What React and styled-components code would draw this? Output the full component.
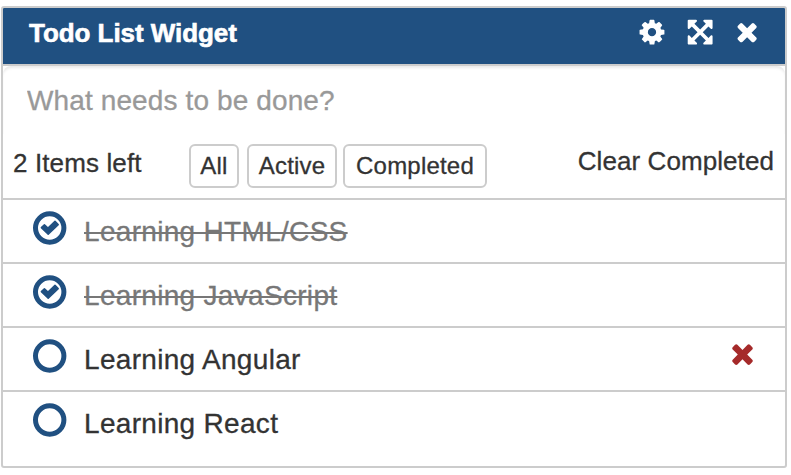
import React from "react";
import styled, { createGlobalStyle } from "styled-components";

const GlobalStyle = createGlobalStyle`
  * { box-sizing: border-box; }
  body { margin: 0; background: #fff; color: #333; font-family: "Liberation Sans", Arial, sans-serif; }
  button, input { font: inherit; color: inherit; margin: 0; }
`;

const Widget = styled.section`
  width: 786px;
  height: 462px;
  margin: 6px 0 0 1px;
  border: 2px solid #ccc;
  border-radius: 3px;
  overflow: hidden;
  -webkit-text-stroke: 0.3px;
`;

const Header = styled.header`
  display: flex;
  align-items: center;
  height: 58px;
  padding: 0 23px 8px 26px;
  background: #205081;
  border-bottom: 2px solid #ccc;
  color: #fff;
`;

const Title = styled.h1`
  flex: 1;
  margin: 0;
  padding-top: 1px;
  font-size: 26px;
  line-height: 30px;
  font-weight: 700;
  letter-spacing: -0.05px;
  -webkit-text-stroke: 0.6px #fff;
`;

const Actions = styled.div`
  display: flex;
  gap: 19px;
`;

const IconButton = styled.button`
  display: flex;
  padding: 0;
  border: 0;
  background: none;
  color: ${(p) => p.$color || "inherit"};
`;

const Glyph = styled.svg`
  display: block;
  width: ${(p) => p.$size}px;
  height: ${(p) => p.$size}px;
  fill: currentColor;
`;

const NewTodo = styled.input`
  display: block;
  width: 100%;
  height: 68px;
  padding: 2px 24px 0;
  border: 0;
  border-radius: 8px 8px 0 0;
  box-shadow: inset 0 3px 3px -1px rgba(0, 0, 0, 0.09);
  background: #fff;
  font-size: 28px !important;
  letter-spacing: 0.12px;
  outline: 0;
  &::placeholder { color: #999; opacity: 1; }
`;

const Toolbar = styled.div`
  display: flex;
  align-items: flex-start;
  height: 64px;
  padding: 10px 11px 0 10px;
`;

const Count = styled.span`
  width: 176px;
  padding-top: 4px;
  font-size: 26px;
  line-height: 30px;
  letter-spacing: 0.12px;
`;

const Filters = styled.div`
  display: flex;
  flex: 1;
`;

const Filter = styled.button`
  width: ${(p) => p.$width}px;
  height: 44px;
  margin-right: ${(p) => p.$gap || 0}px !important;
  padding: 0 0 1px;
  border: 2px solid #ccc;
  border-radius: 6px;
  background: #fff;
  font-size: 24px !important;
  letter-spacing: 0.2px;
  text-align: center;
  -webkit-text-stroke: 0.3px;
`;

const Clear = styled.span`
  padding-top: 2px;
  font-size: 26px;
  line-height: 30px;
  letter-spacing: 0.08px;
  white-space: nowrap;
`;

const List = styled.ul`
  margin: 0;
  padding: 0;
  list-style: none;
`;

const Item = styled.li`
  display: flex;
  align-items: flex-start;
  height: 64px;
  padding: 11px 27px 0 29px;
  border-top: 2px solid #ccc;
`;

const Status = styled.svg`
  width: 36px;
  height: 36px;
  flex: none;
  color: #205081;
`;

const Label = styled.span`
  flex: 1;
  padding-top: 5px;
  margin-left: 16px;
  font-size: 28px;
  line-height: 32px;
  letter-spacing: 0.31px;
`;

const Text = styled.span`
  color: ${(p) => (p.$done ? "#777" : "#333")};
  text-decoration: ${(p) => (p.$done ? "line-through" : "none")};
  text-decoration-thickness: 2px;
  text-decoration-skip-ink: none;
`;

const Remove = styled(IconButton)`
  margin-top: -1px;
`;

const PATHS = {
  cog: "M1152 896q0-106-75-181t-181-75-181 75-75 181 75 181 181 75 181-75 75-181zm512-109v222q0 12-8 23t-20 13l-185 28q-19 54-39 91 35 50 107 138 10 12 10 25t-9 23q-27 37-99 108t-94 71q-12 0-26-9l-138-108q-44 23-91 38-16 136-29 186-7 28-36 28h-222q-14 0-24.5-8.5t-11.5-21.5l-28-184q-49-16-90-37l-141 107q-10 9-25 9-14 0-25-11-126-114-165-168-7-10-7-23 0-12 8-23 15-21 51-66.5t54-70.5q-27-50-41-99l-183-27q-13-2-21-12.5t-8-23.5v-222q0-12 8-23t19-13l186-28q14-46 39-92-40-57-107-138-10-12-10-24 0-10 9-23 26-36 98.5-107.5t94.5-71.5q13 0 26 10l138 107q44-23 91-38 16-136 29-186 7-28 36-28h222q14 0 24.5 8.5t11.5 21.5l28 184q49 16 90 37l142-107q9-9 24-9 13 0 25 10 129 119 165 170 7 8 7 22 0 12-8 23-15 21-51 66.5t-54 70.5q26 50 41 98l183 28q13 2 21 12.5t8 23.5z",
  expand: "M1411 541l-355 355 355 355 144-144q29-31 70-14 39 17 39 59v448q0 26-19 45t-45 19h-448q-42 0-59-40-17-39 14-69l144-144-355-355-355 355 144 144q31 30 14 69-17 40-59 40h-448q-26 0-45-19t-19-45v-448q0-42 40-59 39-17 69 14l144 144 355-355-355-355-144 144q-19 19-45 19-12 0-24-5-40-17-40-59v-448q0-26 19-45t45-19h448q42 0 59 40 17 39-14 69l-144 144 355 355 355-355-144-144q-31-30-14-69 17-40 59-40h448q26 0 45 19t19 45v448q0 42-39 59-13 5-25 5-26 0-45-19z",
  times: "M1490 1322q0 40-28 68l-136 136q-28 28-68 28t-68-28l-294-294-294 294q-28 28-68 28t-68-28l-136-136q-28-28-28-68t28-68l294-294-294-294q-28-28-28-68t28-68l136-136q28-28 68-28t68 28l294 294 294-294q28-28 68-28t68 28l136 136q28 28 28 68t-28 68l-294 294 294 294q28 28 28 68z",
};

const Icon = ({ name, size = 29, viewBox = "0 0 1792 1792" }) => (
  <Glyph $size={size} viewBox={viewBox} aria-hidden="true">
    <path d={PATHS[name]} />
  </Glyph>
);

const StatusIcon = ({ done }) => (
  <Status viewBox="0 0 36 36" aria-hidden="true">
    <circle cx="17.7" cy="17" r="14.2" fill="none" stroke="currentColor" strokeWidth="5" />
    {done && (
      <path
        d="M9.4 16.6 12.4 13.7 16 17.1 23 10.4 26.2 13.6 16.2 23.3Z"
        fill="currentColor"
        stroke="currentColor"
        strokeWidth="1.5"
        strokeLinejoin="round"
      />
    )}
  </Status>
);

const TODOS = [
  { text: "Learning HTML/CSS", done: true },
  { text: "Learning JavaScript", done: true },
  { text: "Learning Angular", done: false, removable: true },
  { text: "Learning React", done: false },
];

export default function App() {
  return (
    <>
      <GlobalStyle />
      <Widget>
        <Header>
          <Title>Todo List Widget</Title>
          <Actions>
            <IconButton aria-label="Settings"><Icon name="cog" viewBox="-30 20 1792 1792" /></IconButton>
            <IconButton aria-label="Expand"><Icon name="expand" viewBox="-40 20 1792 1792" /></IconButton>
            <IconButton aria-label="Close"><Icon name="times" viewBox="24 50 1792 1792" /></IconButton>
          </Actions>
        </Header>
        <NewTodo placeholder="What needs to be done?" />
        <Toolbar>
          <Count>2 Items left</Count>
          <Filters>
            <Filter $width={50} $gap={8}>All</Filter>
            <Filter $width={90} $gap={6}>Active</Filter>
            <Filter $width={144}>Completed</Filter>
          </Filters>
          <Clear>Clear Completed</Clear>
        </Toolbar>
        <List>
          {TODOS.map((todo) => (
            <Item key={todo.text}>
              <StatusIcon done={todo.done} />
              <Label><Text $done={todo.done}>{todo.text}</Text></Label>
              {todo.removable && (
                <Remove aria-label="Delete" $color="#a52a2a"><Icon name="times" size={31} /></Remove>
              )}
            </Item>
          ))}
        </List>
      </Widget>
    </>
  );
}
